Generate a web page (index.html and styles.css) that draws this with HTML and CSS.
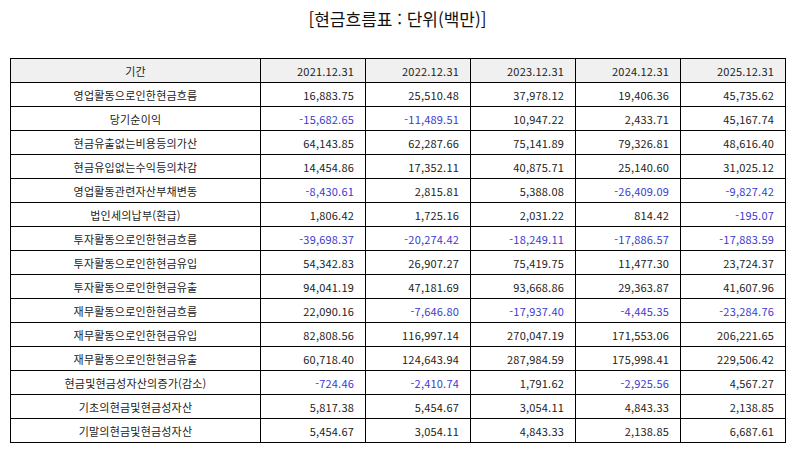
FILE: index.html
```html
<!DOCTYPE html>
<html lang="ko">
<head>
<meta charset="utf-8">
<link rel="stylesheet" href="styles.css">
</head>
<body>
<div class="page">
  <h1 class="title">[현금흐름표 : 단위(백만)]</h1>
  <table class="fin">
    <thead>
      <tr><th>기간</th><th>2021.12.31</th><th>2022.12.31</th><th>2023.12.31</th><th>2024.12.31</th><th>2025.12.31</th></tr>
    </thead>
    <tbody>
      <tr><td>영업활동으로인한현금흐름</td><td>16,883.75</td><td>25,510.48</td><td>37,978.12</td><td>19,406.36</td><td>45,735.62</td></tr>
      <tr><td>당기순이익</td><td class="neg">-15,682.65</td><td class="neg">-11,489.51</td><td>10,947.22</td><td>2,433.71</td><td>45,167.74</td></tr>
      <tr><td>현금유출없는비용등의가산</td><td>64,143.85</td><td>62,287.66</td><td>75,141.89</td><td>79,326.81</td><td>48,616.40</td></tr>
      <tr><td>현금유입없는수익등의차감</td><td>14,454.86</td><td>17,352.11</td><td>40,875.71</td><td>25,140.60</td><td>31,025.12</td></tr>
      <tr><td>영업활동관련자산부채변동</td><td class="neg">-8,430.61</td><td>2,815.81</td><td>5,388.08</td><td class="neg">-26,409.09</td><td class="neg">-9,827.42</td></tr>
      <tr><td>법인세의납부(환급)</td><td>1,806.42</td><td>1,725.16</td><td>2,031.22</td><td>814.42</td><td class="neg">-195.07</td></tr>
      <tr><td>투자활동으로인한현금흐름</td><td class="neg">-39,698.37</td><td class="neg">-20,274.42</td><td class="neg">-18,249.11</td><td class="neg">-17,886.57</td><td class="neg">-17,883.59</td></tr>
      <tr><td>투자활동으로인한현금유입</td><td>54,342.83</td><td>26,907.27</td><td>75,419.75</td><td>11,477.30</td><td>23,724.37</td></tr>
      <tr><td>투자활동으로인한현금유출</td><td>94,041.19</td><td>47,181.69</td><td>93,668.86</td><td>29,363.87</td><td>41,607.96</td></tr>
      <tr><td>재무활동으로인한현금흐름</td><td>22,090.16</td><td class="neg">-7,646.80</td><td class="neg">-17,937.40</td><td class="neg">-4,445.35</td><td class="neg">-23,284.76</td></tr>
      <tr><td>재무활동으로인한현금유입</td><td>82,808.56</td><td>116,997.14</td><td>270,047.19</td><td>171,553.06</td><td>206,221.65</td></tr>
      <tr><td>재무활동으로인한현금유출</td><td>60,718.40</td><td>124,643.94</td><td>287,984.59</td><td>175,998.41</td><td>229,506.42</td></tr>
      <tr><td>현금및현금성자산의증가(감소)</td><td class="neg">-724.46</td><td class="neg">-2,410.74</td><td>1,791.62</td><td class="neg">-2,925.56</td><td>4,567.27</td></tr>
      <tr><td>기초의현금및현금성자산</td><td>5,817.38</td><td>5,454.67</td><td>3,054.11</td><td>4,843.33</td><td>2,138.85</td></tr>
      <tr><td>기말의현금및현금성자산</td><td>5,454.67</td><td>3,054.11</td><td>4,843.33</td><td>2,138.85</td><td>6,687.61</td></tr>
    </tbody>
  </table>
</div>
</body>
</html>
```

FILE: styles.css
```css
html, body {
  margin: 0;
  padding: 0;
  background: #ffffff;
}
.page {
  padding: 6px 9px 0 10px;
  font-family: "Noto Sans CJK KR", "Noto Sans", sans-serif;
  color: #222222;
}
.title {
  margin: 0 0 26px 0;
  height: 26px;
  line-height: 26px;
  font-size: 17px;
  font-weight: normal;
  text-align: center;
  color: #111111;
}
.fin {
  border-collapse: collapse;
  width: 776px;
  table-layout: fixed;
  font-size: 11px;
  letter-spacing: 0.2px;
}
.fin th, .fin td {
  border: 1px solid #000000;
  height: 24px;
  padding: 0 11px 0 7px;
  line-height: 14px;
  font-weight: normal;
  text-align: right;
  box-sizing: border-box;
}
.fin th:first-child, .fin td:first-child {
  width: 250px;
  padding: 0 7px;
  text-align: center;
}
.fin thead th {
  background: #f0f0f0;
}
.fin .neg {
  color: #3a3ad0;
}
```
